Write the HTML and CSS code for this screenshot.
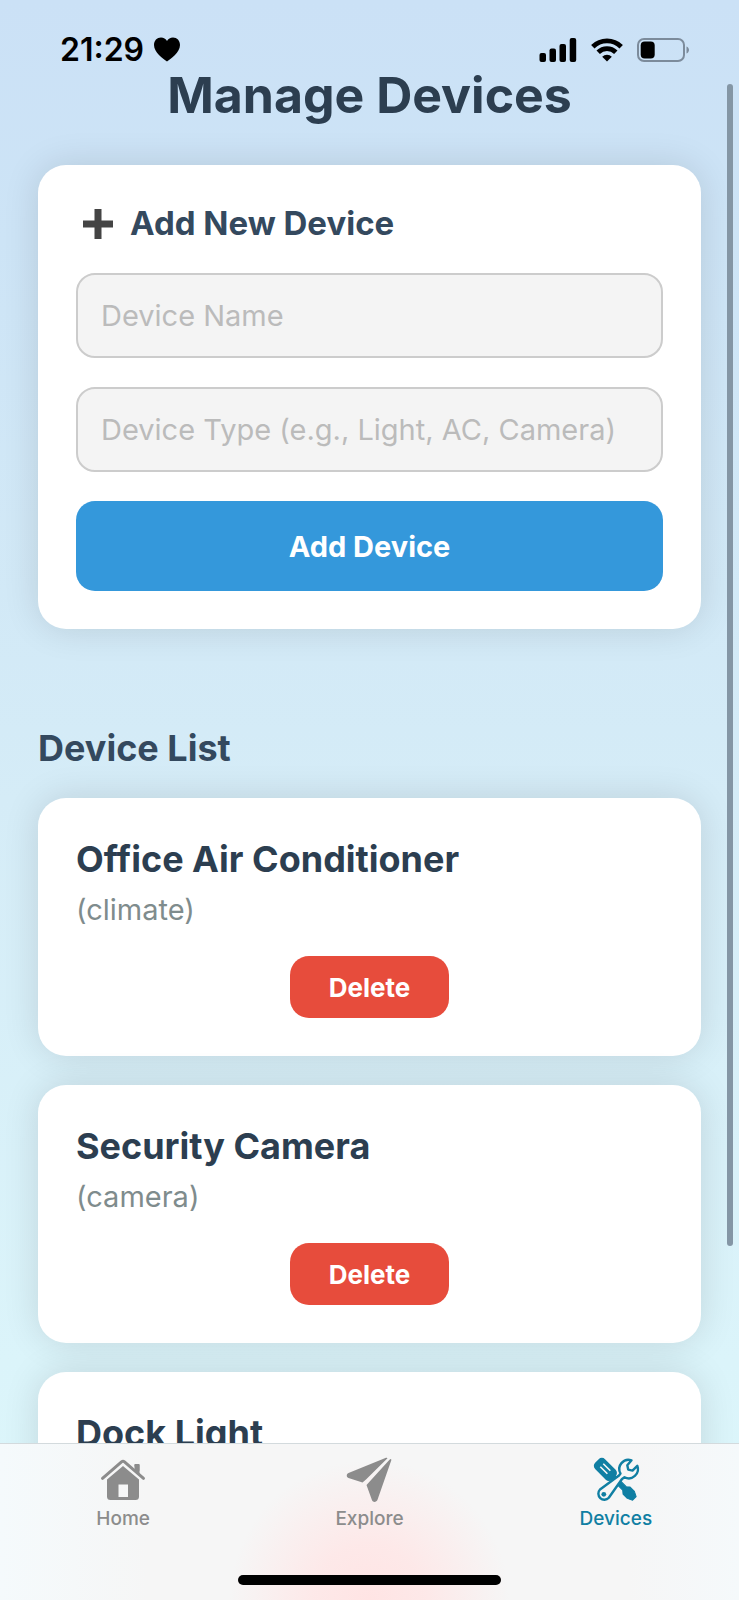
FILE: index.html
```
<!DOCTYPE html>
<html lang="en">
<head>
<meta charset="utf-8">
<meta name="viewport" content="width=device-width, initial-scale=1">
<title>Manage Devices</title>
<link rel="stylesheet" href="styles.css">
</head>
<body>
<div class="screen">
  <header class="status">
    <div class="status-left">
      <span class="time">21:29</span>
      <svg class="heart" viewBox="0 0 26 25" width="26" height="25"><path d="M13 24.500C9 21.500 0 15.500 0 8 0 3.500 3 .5 7 .5c2.600 0 4.800 1.300 6 3.500 1.200-2.200 3.400-3.500 6-3.500 4 0 7 3 7 7.500 0 7.500-9 13.500-13 16.500z"/></svg>
    </div>
    <div class="status-right">
      <svg viewBox="0 0 38 24" width="38" height="24"><rect x="0.500" y="15" width="6.500" height="9" rx="2"/><rect x="10.500" y="10.500" width="6.500" height="13.500" rx="2"/><rect x="20.500" y="6" width="6.500" height="18" rx="2"/><rect x="30.700" y="0" width="6.500" height="24" rx="2"/></svg>
      <svg viewBox="0 0 32 24" width="32" height="24"><g fill="none" stroke="#000" stroke-width="4.800"><path d="M1.800 8.800a20.200 20.200 0 0 1 28.400 0"/><path d="M7.200 14.300a12.500 12.500 0 0 1 17.600 0"/></g><path d="M16 23.600l-4.800-4.900a6.900 6.900 0 0 1 9.600 0z"/></svg>
      <svg viewBox="0 0 53 24" width="53" height="24"><rect x="1" y="1" width="46" height="22" rx="6" fill="none" stroke="#7c8b9b" stroke-width="2"/><rect x="3.700" y="3.500" width="14" height="17" rx="4"/><path d="M49.500 8.500v7c1.600-.7 2.500-1.900 2.500-3.500s-.9-2.800-2.500-3.500z" fill="#7c8b9b"/></svg>
    </div>
  </header>

  <main class="content">
    <h1 class="title">Manage Devices</h1>

    <form class="card add-card">
      <h2 class="add-heading">
        <svg viewBox="0 0 30 30" width="30" height="30"><path d="M11.500 0h7v11.500H30v7H18.500V30h-7V18.500H0v-7h11.500z" fill="#444"/></svg>
        Add New Device
      </h2>
      <input class="field" type="text" aria-label="Device Name" placeholder="Device Name">
      <input class="field" type="text" aria-label="Device Type" placeholder="Device Type (e.g., Light, AC, Camera)">
      <button class="add-button" type="button">Add Device</button>
    </form>

    <h2 class="list-heading">Device List</h2>
    <ul class="devices">
      <li class="card">
        <h3 class="name">Office Air Conditioner</h3>
        <p class="type">(climate)</p>
        <button class="delete" type="button">Delete</button>
      </li>
      <li class="card">
        <h3 class="name">Security Camera</h3>
        <p class="type">(camera)</p>
        <button class="delete" type="button">Delete</button>
      </li>
      <li class="card">
        <h3 class="name">Dock Light</h3>
      </li>
    </ul>
  </main>

  <div class="scrollbar"></div>

  <footer class="bottom">
    <nav class="tabs">
      <a class="tab" href="#home">
        <svg viewBox="0 0 46 46" width="46" height="46"><g fill="#8c8c8c"><path d="M23 9 39 22.500V39.500a3.500 3.500 0 0 1-3.500 3.500H10.500a3.500 3.500 0 0 1-3.500-3.500V22.500zM18.500 27.500v12.500h9.500V27.500z" fill-rule="evenodd"/><path d="M34.500 8a1 1 0 0 1 1-1h3a1 1 0 0 1 1 1v9.500l-5-4.300z"/></g><path d="M2.500 21.300 21.500 4.800q1.500-1.200 3 0L43.500 21.300" fill="none" stroke="#f6f6f6" stroke-width="6"/><path d="M34.500 8a1 1 0 0 1 1-1h3a1 1 0 0 1 1 1v9.500l-5-4.300z" fill="#8c8c8c"/><path d="M2.500 21.300 21.500 4.800q1.500-1.200 3 0L43.500 21.300" fill="none" stroke="#8c8c8c" stroke-width="3" stroke-linecap="round"/></svg>
        <span>Home</span>
      </a>
      <a class="tab" href="#explore">
        <svg viewBox="0 0 46 46" width="46" height="46"><g fill="#8c8c8c"><path d="M41.500 1.300 20 22.500 16.500 25.500 2.500 21c-2.300-.9-2.300-4 0-5L40 .8q1.200-.5 1.500.5z"/><path d="M45.300 3.300 31.500 42.800c-1 2.600-4.300 2.900-5.500.5L20.500 28 43.500 2.700q2-1.400 1.800.6z"/></g></svg>
        <span>Explore</span>
      </a>
      <a class="tab tab-active" href="#devices" aria-current="page">
        <svg viewBox="0 0 46 46" width="46" height="46">
          <g transform="rotate(-45 23 23)" fill="#107fa3"><rect x="16" y="-4" width="14" height="24" rx="4.500"/><path d="M20.500 19h5v16l2.500 3v6l-2.500 5h-5l-2.500-5v-6l2.500-3z" stroke="#107fa3" stroke-linejoin="round"/><path d="M21.300 2.500v10M25.500 2.500v10" stroke="#f6f6f6" stroke-width="1.600"/></g>
          <path d="M38.500 3.300 34.300 8.300 35.200 12.600 39.500 13.600 44.300 8.800A9.200 9.200 0 0 1 31.500 20.300L29 22 15.800 40.800A6 6 0 1 1 7 32.500L26 18.500 27.500 16.500A9.200 9.200 0 0 1 38.500 3.300z" fill="#f6f6f6" stroke="#107fa3" stroke-width="2.400" stroke-linejoin="round"/><circle cx="10.800" cy="37.300" r="2.400" fill="#107fa3"/></svg>
        <span>Devices</span>
      </a>
    </nav>
    <div class="home-indicator"></div>
  </footer>
</div>
</body>
</html>
```
FILE: styles.css
```
* {
  box-sizing: border-box;
}

body {
  margin: 0;
  font-family: Inter, "Liberation Sans", sans-serif;
}

h1, h2, h3, p, ul {
  margin: 0;
  padding: 0;
}

svg {
  display: block;
  flex: none;
  overflow: visible;
}

.screen {
  position: relative;
  display: flex;
  flex-direction: column;
  height: 100vh;
  overflow: hidden;
  background: linear-gradient(#cbe1f6 0%, #cde4f6 15%, #d5ecf7 50%, #dbf4fa 85%, #dcf7fb 100%);
}

.status {
  display: flex;
  flex: none;
  justify-content: space-between;
  align-items: flex-end;
  height: 63px;
  padding: 0 49px 1px 60px;
}

.status-left,
.status-right {
  display: flex;
  align-items: center;
}

.status-left {
  gap: 10px;
}

.status-right {
  gap: 14px;
}

.time {
  font-size: 32px;
  line-height: 24px;
  font-weight: 600;
}

.content {
  flex: 1;
  min-height: 0;
  padding: 0 38px;
  overflow: hidden;
}

.title {
  color: #2c3e50;
  font-size: 50px;
  line-height: 64px;
  font-weight: 700;
  text-align: center;
}

.card {
  padding: 38px;
  border-radius: 28px;
  background: #fff;
  box-shadow: 0 0 36px rgba(0, 0, 0, 0.12);
}

.add-card {
  display: flex;
  flex-direction: column;
  gap: 29px;
  margin-top: 38px;
}

.add-heading {
  display: flex;
  align-items: center;
  gap: 17px;
  padding-left: 7px;
  color: #34495e;
  font-size: 33px;
  line-height: 41px;
  font-weight: 700;
}

.field {
  width: 100%;
  height: 85px;
  padding: 0 23px;
  border: 2px solid #ccc;
  border-radius: 19px;
  background: #f4f4f4;
  color: #333;
  font: 400 29px Inter, "Liberation Sans", sans-serif;
}

.field::placeholder {
  color: #bbb;
  opacity: 1;
}

.add-button {
  height: 90px;
  border: 0;
  border-radius: 19px;
  background: #3498db;
  color: #fff;
  font: 700 29px Inter, "Liberation Sans", sans-serif;
}

.list-heading {
  margin-top: 96px;
  color: #34495e;
  font-size: 36px;
  line-height: 46px;
  font-weight: 700;
}

.devices {
  display: flex;
  flex-direction: column;
  gap: 29px;
  margin-top: 27px;
  list-style: none;
}

.name {
  color: #2c3e50;
  font-size: 36px;
  line-height: 46px;
  font-weight: 700;
}

.type {
  margin-top: 10px;
  color: #7f8c8d;
  font-size: 29px;
  line-height: 36px;
}

.delete {
  display: block;
  height: 62px;
  margin: 28px auto 0;
  padding: 0 39px;
  border: 0;
  border-radius: 19px;
  background: #e74c3c;
  color: #fff;
  font: 700 26px Inter, "Liberation Sans", sans-serif;
}

.scrollbar {
  position: absolute;
  top: 84px;
  right: 6px;
  width: 6px;
  height: 1162px;
  border-radius: 3px;
  background: #8496a5;
}

.bottom {
  position: relative;
  flex: none;
  padding: 13px 0 15px;
  border-top: 1px solid #d3dadd;
  background:
    radial-gradient(circle 140px at 50% 100%, #ffe4e4 0%, rgba(254, 231, 231, 0.9) 40%, rgba(246, 240, 240, 0) 100%),
    linear-gradient(90deg, #f5fafc 0%, #f6f6f6 20%, #f6f6f6 85%, #f5f9fb 100%);
}

.tabs {
  display: grid;
  grid-template-columns: repeat(3, 1fr);
}

.tab {
  display: flex;
  flex-direction: column;
  align-items: center;
  gap: 3px;
  color: #8c8c8c;
  font-size: 19px;
  line-height: 26px;
  font-weight: 500;
  text-decoration: none;
}

.tab-active {
  color: #107fa3;
}

.home-indicator {
  width: 263px;
  height: 10px;
  margin: 43px auto 0;
  border-radius: 5px;
  background: #000;
}
```
